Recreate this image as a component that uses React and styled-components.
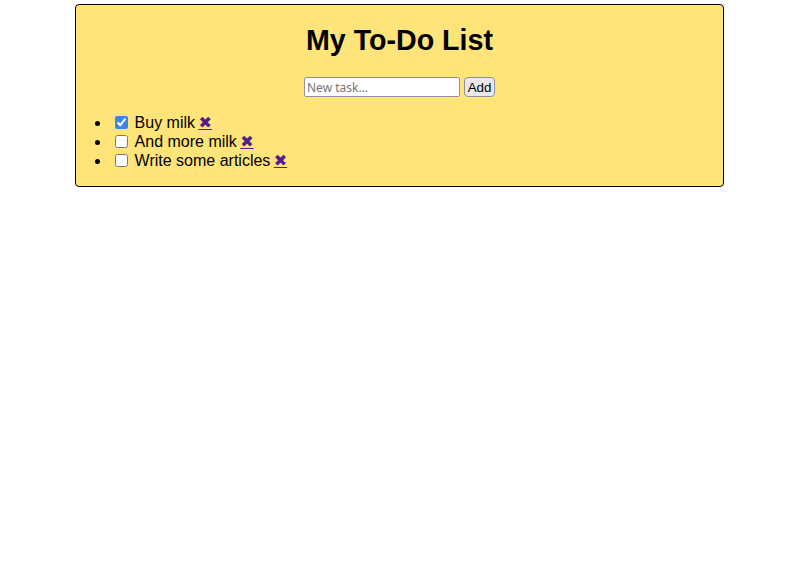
import React, { useState } from "react";
import styled, { createGlobalStyle } from "styled-components";

const GlobalStyle = createGlobalStyle`
  html, body { margin: 0; padding: 0; background: #ffffff; }
  body { font-family: "Liberation Sans", "DejaVu Sans", Arial, sans-serif; font-size: 16px; color: #000; }
`;

const Card = styled.div`
  box-sizing: border-box;
  width: 649px;
  height: 183px;
  margin: 4px 0 0 75px;
  background: #ffe47a;
  border: 1px solid #000;
  border-radius: 4px;
`;

const Title = styled.h1`
  margin: 19px 0 0;
  font-size: 28.6px;
  line-height: 32px;
  font-weight: bold;
  text-align: center;
`;

const Form = styled.form`
  display: flex;
  justify-content: center;
  align-items: center;
  gap: 4px;
  margin-top: 21px;
`;

const TaskInput = styled.input`
  box-sizing: border-box;
  width: 156px;
  height: 20px;
  margin: 0;
  padding: 1px 2px;
  border: 1px solid #8f8f9d;
  border-radius: 2px;
  background: #fff;
  font-family: "Noto Sans", "Open Sans", sans-serif;
  font-size: 12px;
  color: #000;
  &::placeholder { color: #757575; }
`;

const AddButton = styled.button`
  box-sizing: border-box;
  width: 31px;
  height: 20px;
  margin: 0;
  padding: 0;
  border: 1px solid #8f8f9d;
  border-radius: 4px;
  background: #e9e9ed;
  font-family: "Liberation Sans", Arial, sans-serif;
  font-size: 13.33px;
  color: #000;
`;

const List = styled.ul`
  margin: 16px 0;
  padding-left: 35px;
  list-style: disc;
`;

const Item = styled.li`
  height: 19px;
  line-height: 19px;
`;

const Row = styled.span`
  display: inline-flex;
  align-items: center;
  height: 19px;
  vertical-align: top;
`;

const Check = styled.input`
  width: 13px;
  height: 13px;
  margin: 3px 3px 3px 4px;
  accent-color: #3b86e8;
`;

const Label = styled.span`
  margin-left: 3.6px;
  white-space: pre;
`;

const Remove = styled.a`
  margin-left: 3.4px;
  color: #551a8b;
  text-decoration: underline;
  font-family: "DejaVu Sans", sans-serif;
  font-size: 16px;
  line-height: 19px;
  cursor: pointer;
`;

export default function App() {
  const [tasks, setTasks] = useState([
    { text: "Buy milk", done: true },
    { text: "And more milk", done: false },
    { text: "Write some articles", done: false },
  ]);
  return (
    <>
      <GlobalStyle />
      <Card>
        <Title>My To-Do List</Title>
        <Form onSubmit={(e) => e.preventDefault()}>
          <TaskInput type="text" placeholder="New task..." />
          <AddButton type="submit">Add</AddButton>
        </Form>
        <List>
          {tasks.map((t, i) => (
            <Item key={i}>
              <Row>
                <Check
                  type="checkbox"
                  checked={t.done}
                  onChange={() =>
                    setTasks(tasks.map((x, j) => (j === i ? { ...x, done: !x.done } : x)))
                  }
                />
                <Label>{t.text}</Label>
                <Remove href="#">✖</Remove>
              </Row>
            </Item>
          ))}
        </List>
      </Card>
    </>
  );
}
